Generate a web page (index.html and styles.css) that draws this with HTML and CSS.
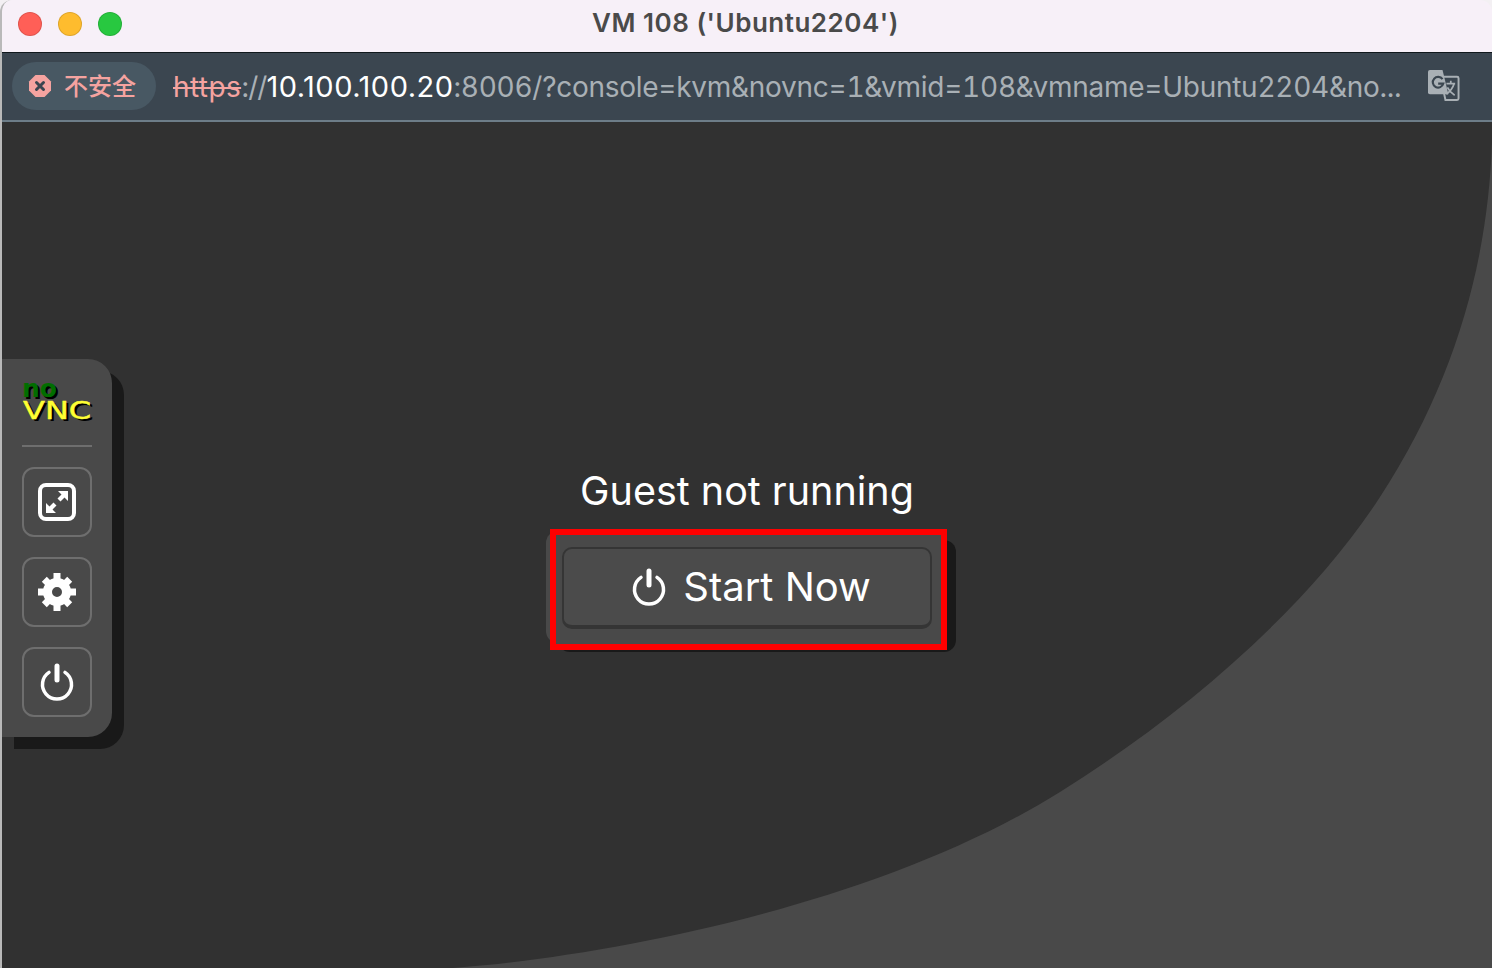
FILE: index.html
```html
<!DOCTYPE html>
<html lang="en">
<head>
<meta charset="utf-8">
<title>VM 108</title>
<link rel="stylesheet" href="styles.css">
</head>
<body>
<div class="window">
  <header class="titlebar">
    <div class="lights">
      <span class="light red"></span>
      <span class="light yellow"></span>
      <span class="light green"></span>
    </div>
    <div class="title">VM 108 ('Ubuntu2204')</div>
  </header>
  <div class="addressbar">
    <div class="badge">
      <svg class="badge-icon" viewBox="0 0 24 24" width="24" height="24"><path fill="#f5a3a0" d="M7.5 1h9L23 7.500v9L16.500 23h-9L1 16.500v-9z"/><path stroke="#3b4650" stroke-width="3" stroke-linecap="round" d="M8.500 8.500l7 7M15.500 8.500l-7 7"/></svg>
      <span class="badge-text">不安全</span>
    </div>
    <div class="url"><span class="scheme">https</span><span class="sep">://</span><span class="host">10.100.100.20</span><span class="rest">:8006/?console=kvm&amp;novnc=1&amp;vmid=108&amp;vmname=Ubuntu2204&amp;no...</span></div>
    <svg class="translate" viewBox="0 0 34 34" width="33" height="33">
      <path fill="none" stroke="#a9b0b5" stroke-width="2" d="M14 8h17a1.500 1.500 0 0 1 1.500 1.500v21a1.500 1.500 0 0 1-1.500 1.500H19z"/>
      <path fill="#a9b0b5" d="M3 1h13l6 25H3a2 2 0 0 1-2-2V3a2 2 0 0 1 2-2z"/>
      <path fill="none" stroke="#3b4650" stroke-width="2.200" d="M16 10.500a5.500 5.500 0 1 0 .8 4.500h-5.300"/>
      <path fill="none" stroke="#a9b0b5" stroke-width="1.800" d="M20 15h9M24.500 12v3M28 15c-1.500 5-4 8-8 11M21 19c1.500 3 4 6 7.500 8"/>
    </svg>
  </div>
  <main class="viewport">
    <svg class="backdrop" viewBox="0 122 1492 846" width="1492" height="846"><path fill="#494949" d="M1492 142C1488 262 1455 382 1380 497C1310 605 1188 712 1060 792C900 892 668 945 498 964L430 970H1492z"/></svg>
    <aside class="panel">
      <div class="logo"><span class="logo-no">no</span><span class="logo-vnc">VNC</span></div>
      <div class="divider"></div>
      <button class="tool">
        <svg viewBox="0 0 38 38" width="38" height="38"><rect x="2" y="2" width="34" height="34" rx="6" fill="none" stroke="#fff" stroke-width="4"/><path fill="#fff" d="M20 8h10v10l-3.500-3.500-4 4-3-3 4-4zM18 30H8V20l3.500 3.500 4-4 3 3-4 4z"/></svg>
      </button>
      <button class="tool">
        <svg viewBox="0 0 38 38" width="38" height="38"><circle cx="19" cy="19" r="9.500" fill="none" stroke="#fff" stroke-width="9"/><path stroke="#fff" stroke-width="7" stroke-dasharray="8 22 8" d="M19 0v38M0 19h38"/><path stroke="#fff" stroke-width="7" stroke-dasharray="8 20 8" d="M6.300 6.300l25.400 25.400M31.700 6.300L6.300 31.700"/></svg>
      </button>
      <button class="tool">
        <svg viewBox="0 0 38 38" width="38" height="38"><path fill="none" stroke="#fff" stroke-width="3.500" stroke-linecap="round" d="M11 9.400a14.500 14.500 0 1 0 16 0"/><path stroke="#fff" stroke-width="5" stroke-linecap="round" d="M19 3v14"/></svg>
      </button>
    </aside>
    <section class="dialog">
      <div class="message">Guest not running</div>
      <div class="dialog-panel">
        <div class="annotation"></div>
        <button class="start">
          <svg viewBox="0 0 38 38" width="38" height="38"><path fill="none" stroke="#fff" stroke-width="3.500" stroke-linecap="round" d="M11 9.400a14.500 14.500 0 1 0 16 0"/><path stroke="#fff" stroke-width="5" stroke-linecap="round" d="M19 3v14"/></svg>
          <span>Start Now</span>
        </button>
      </div>
    </section>
  </main>
</div>
</body>
</html>
```
FILE: styles.css
```css
* { box-sizing: border-box; }
html, body { margin: 0; height: 100%; background: #f3f0f3; overflow: hidden; }
body { font-family: Inter, "Liberation Sans", "Noto Sans CJK SC", sans-serif; }
.window { width: 1492px; height: 968px; display: flex; flex-direction: column; border-left: 2px solid #b9b9b9; border-radius: 12px 12px 0 0; overflow: hidden; }
.titlebar { height: 53px; background: #f7f0f8; display: flex; align-items: center; position: relative; padding-left: 16px; border-bottom: 1px solid #10181c; flex: none; }
.lights { display: flex; gap: 16px; margin-top: -5px; }
.light { width: 24px; height: 24px; border-radius: 50%; border: 1px solid rgba(0,0,0,.12); }
.red { background: #ff5f57; }
.yellow { background: #febc2e; }
.green { background: #28c840; }
.title { position: absolute; left: 0; right: 3px; top: 8px; text-align: center; font-size: 26px; letter-spacing: .5px; line-height: 30px; font-weight: 600; color: #4a4a4a; }
.addressbar { height: 69px; background: #3b4650; border-bottom: 2px solid #6d7d88; display: flex; align-items: center; padding-left: 10px; flex: none; }
.badge { width: 144px; height: 48px; border-radius: 24px; background: #485863; display: flex; align-items: center; gap: 12px; padding-left: 16px; margin-top: -1px; flex: none; }
.badge-text { font-size: 24px; font-weight: 500; line-height: 30px; margin-top: -3px; color: #f5a3a0; font-family: "Noto Sans CJK SC", sans-serif; }
.url { margin-left: 17px; font-size: 28px; white-space: nowrap; color: #a9b0b5; width: 1227px; }
.scheme { color: #f5a3a0; text-decoration: line-through; letter-spacing: .4px; }
.sep { letter-spacing: -1px; }
.host { color: #fff; font-size: 29px; letter-spacing: .5px; }
.rest { font-variant-numeric: tabular-nums; letter-spacing: -.27px; }
.translate { margin-left: 27px; margin-top: -2px; flex: none; }
.viewport { flex: 1; background: #313131; position: relative; display: flex; align-items: center; justify-content: center; }
.backdrop { position: absolute; left: -2px; top: 0; }
.panel { position: absolute; left: 0; top: 237px; width: 110px; height: 378px; background: #494949; border-radius: 0 24px 24px 0; box-shadow: 12px 12px 0 #191919; display: flex; flex-direction: column; align-items: center; padding-top: 20px; }
.logo { width: 70px; height: 45px; display: flex; flex-direction: column; font-family: "DejaVu Sans", sans-serif; line-height: 1; }
.logo-no { color: #006e00; font-size: 25px; font-weight: 700; height: 21px; line-height: 20px; text-shadow: 2px 2px 0 #000; }
.logo-vnc { color: #ffff33; font-size: 25px; height: 22px; line-height: 22px; margin-left: 1px; transform: scaleX(1.28); transform-origin: left center; -webkit-text-stroke: .5px #ffff33; text-shadow: 2px 2px 0 #000; }
.divider { width: 70px; height: 2px; background: #6e6e6e; margin-top: 21px; }
.tool { width: 70px; height: 70px; margin-top: 20px; border: 2px solid #6e6e6e; border-radius: 12px; background: transparent; padding: 0; display: flex; align-items: center; justify-content: center; }
.dialog { position: relative; width: 402px; display: flex; flex-direction: column; align-items: center; margin-top: 19px; }
.message { font-size: 39.500px; line-height: 50px; color: #fff; margin-bottom: 15px; }
.dialog-panel { position: relative; align-self: flex-start; width: 398px; height: 112px; background: #494949; border-radius: 12px; box-shadow: 12px 9px 0 #191919; padding: 16px 12px 14px 16px; }
.annotation { position: absolute; left: 4px; top: -2px; width: 397px; height: 121px; background: #494949; border: 6px solid #f00; }
.start { position: relative; width: 370px; height: 82px; background: #4b4b4b; border: 2px solid #353535; border-bottom-width: 4px; border-radius: 10px; display: flex; align-items: center; justify-content: center; gap: 15px; color: #fff; font: 40px/1 Inter, "Liberation Sans", sans-serif; padding: 0 0 0 7px; }
```
